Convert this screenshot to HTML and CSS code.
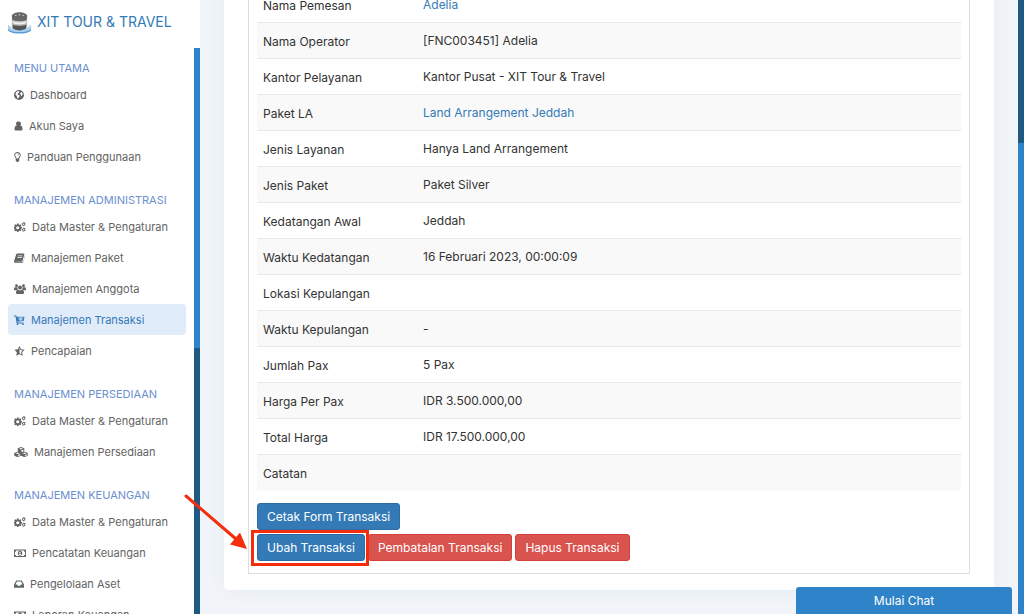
FILE: index.html
```html
<!DOCTYPE html>
<html lang="id">
<head>
<meta charset="utf-8">
<meta name="viewport" content="width=device-width, initial-scale=1">
<title>XIT Tour &amp; Travel</title>
<link rel="stylesheet" href="styles.css">
</head>
<body>
<svg class="sprite" aria-hidden="true">
  <symbol id="cogs" viewBox="0 0 24 20">
    <path fill-rule="evenodd" d="M6 3h3l.4 2.200 1.300.6L12.600 4.500l2 2-1.300 1.900.6 1.300L16 10v3l-2.100.4-.6 1.300 1.300 1.900-2 2-1.900-1.300-1.300.6L9 20H6l-.4-2.100-1.300-.6-1.900 1.300-2-2 1.300-1.900-.6-1.300L0 13v-3l1.100-.3.6-1.300L.4 6.500l2-2 1.900 1.300 1.300-.6zM7.500 8.300a3.200 3.200 0 1 0 0 6.400 3.200 3.200 0 0 0 0-6.400z"/>
    <path fill-rule="evenodd" d="M19 0l1.200 1.200 2-.3.7 1.700-1 1.600 1.100 1.500-1.200 1.600-1.600-.4-1.600 1.400-1.600-1-.1-1.700-1.600-1 .7-1.900 1.800-.2zM19.300 2.800a1.500 1.500 0 1 0 0 3 1.500 1.500 0 0 0 0-3zM19 11l1.200 1.200 2-.3.7 1.700-1 1.600 1.100 1.500-1.200 1.600-1.600-.4-1.600 1.400-1.600-1-.1-1.700-1.600-1 .7-1.900 1.800-.2zM19.300 13.800a1.500 1.500 0 1 0 0 3 1.500 1.500 0 0 0 0-3z"/>
  </symbol>
  <symbol id="money" viewBox="0 0 24 20">
    <path fill-rule="evenodd" d="M0 3h24v15H0zm4.500 1.800A3 3 0 0 1 1.800 7.500v6a3 3 0 0 1 2.700 2.700h15a3 3 0 0 1 2.700-2.700v-6a3 3 0 0 1-2.700-2.700zM12 5.500c3 0 4.500 2.300 4.500 5S15 15.500 12 15.500s-4.500-2.300-4.500-5 1.500-5 4.500-5zm-.8 2L9.500 9l.8 1 .9-.6v3.300H9.700V14h4.600v-1.300h-1.500V7.500z"/>
  </symbol>
</svg>
<div class="app">
  <aside class="sidebar">
    <a class="brand" href="#">
      <svg class="logo" viewBox="0 0 24 24" aria-hidden="true">
        <path d="M0 14v6c5 4 19 4 24 0v-6l-4 4c-4 2-12 2-16 0z" fill="#a9d2f2"/>
        <path d="M0 19c5 4 19 4 24 0v1.500c-5 4-19 4-24 0z" fill="#5a9bd8"/>
        <path d="M4 5c1-4 15-4 16 0v12c-1 4-15 4-16 0z" fill="#b9b9b9"/>
        <path d="M4 5c1-5 15-5 16 0l-.5 4c-3 2-12 2-15 0z" fill="#666"/>
        <path d="M5 10.500c4 2 10 2 14 0v2c-4 2-10 2-14 0z" fill="#eee"/>
        <path d="M5 14c3 2 11 2 14 0v4c-3 3-11 3-14 0z" fill="#555"/>
        <path d="M7 4.500h2m2-.5h2m2 .5h2" stroke="#ccc"/>
      </svg>
      <span>XIT TOUR &amp; TRAVEL</span>
    </a>
    <div class="sidebar-body">
      <nav class="menu">
        <section>
          <h2>MENU UTAMA</h2>
          <a href="#"><svg width="10" height="10" viewBox="0 0 20 20"><path fill-rule="evenodd" d="M10 0a10 10 0 1 0 0 20 10 10 0 0 0 0-20zM8 2l3 1.500-1 2-2.500 1.500-1 2 2.500.5 2.500 2-1 2.500-2 1.500-.5 2.500-2-3-.5-3.500-2.500-2C3 5.500 5 3 8 2zm5.500.8A8 8 0 0 1 18 9l-1.500.5-1 2.500-1.500-.5-.5-2.500-1.500-1 .5-2 2-.5z"/></svg>Dashboard</a>
          <a href="#"><svg width="9" height="10" viewBox="0 0 18 20"><path d="M9 1a4.600 4.600 0 0 1 3.500 8C15.500 9.500 17 12 17 16c0 2-1 3-3 3H4c-2 0-3-1-3-3 0-4 1.500-6.500 4.500-7A4.600 4.600 0 0 1 9 1z"/></svg>Akun Saya</a>
          <a href="#"><svg width="7" height="10" viewBox="0 0 14 20"><path fill-rule="evenodd" d="M7 0c4 0 6.500 3 6.500 6 0 3.500-3 4.500-3 8v3.500L8 20H6l-2.500-2.500V14c0-3.500-3-4.500-3-8 0-3 2.500-6 6.500-6zm0 1.800C4 1.800 2.300 4 2.300 6c0 2.500 2.500 3.500 2.900 7h3.600c.4-3.500 2.900-4.500 2.900-7 0-2-1.700-4.200-4.700-4.200zM7 3.500c2 0 3 1 3 2.500H8.800C8.800 5 8 4.700 7 4.700z"/></svg>Panduan Penggunaan</a>
        </section>
        <section>
          <h2>MANAJEMEN ADMINISTRASI</h2>
          <a href="#"><svg width="12" height="10"><use href="#cogs"/></svg>Data Master &amp; Pengaturan</a>
          <a href="#"><svg width="11" height="10" viewBox="0 0 22 20"><path fill-rule="evenodd" d="M7.500 1H19c1.500 0 2 1 1.700 2L17 15.500c-.4 1.500-1 2-2.500 2H3.500c-1 0-1.300.5-1 1H15c2 0 3-.5 3.500-2L22 5v1.500L18.500 18c-.5 1.500-1.500 2-3 2H3c-2 0-3.500-2-2.800-4L4 4c.5-2 1.500-3 3.500-3zM8 5l-.4 1.300h9L17 5zM7 8l-.4 1.300h9L16 8z"/></svg>Manajemen Paket</a>
          <a href="#"><svg width="12" height="10" viewBox="0 0 24 20"><circle cx="5" cy="3.500" r="2.800"/><circle cx="19" cy="3.500" r="2.800"/><circle cx="12" cy="7" r="4"/><path d="M2 6.500h5A6 6 0 0 0 8 11c-1.500 0-2.500.5-3.500 1.500H2c-1.500 0-2-1-2-2.500s.5-3.500 2-3.500zM22 6.500h-5a6 6 0 0 1-1 4.500c1.500 0 2.500.5 3.500 1.500H22c1.500 0 2-1 2-2.500s-.5-3.500-2-3.500zM8 11.500c2.500 1.500 5.500 1.500 8 0 3 0 4 3 4 5.500 0 2-1 3-3 3H7c-2 0-3-1-3-3 0-2.500 1-5.500 4-5.500z"/></svg>Manajemen Anggota</a>
          <a class="active" href="#" aria-current="page"><svg width="11" height="10" viewBox="0 0 22 20"><path fill-rule="evenodd" d="M0 1h4.500l.8 2.500H21L19.500 12 7 13.300V15h12v2H5l-.2-3L3.200 3H0zm9 4v2h3.500v2H9.200v1.500h3.300v1.200h1.800v-1.400h3l.3-1.500h-3.300V7H18V5z"/><circle cx="7" cy="18.300" r="1.700"/><circle cx="18" cy="18.300" r="1.700"/></svg>Manajemen Transaksi</a>
          <a href="#"><svg width="11" height="10" viewBox="0 0 22 20"><path fill-rule="evenodd" d="M11 0l3.200 6.500 7.100 1-5.100 5 1.200 7.200L11 16.300l-6.400 3.400 1.200-7.200-5.100-5 7.100-1zM11 4v10.500l4 2.200-.8-4.700 3.300-3.200-4.500-.7z"/></svg>Pencapaian</a>
        </section>
        <section>
          <h2>MANAJEMEN PERSEDIAAN</h2>
          <a href="#"><svg width="12" height="10"><use href="#cogs"/></svg>Data Master &amp; Pengaturan</a>
          <a href="#"><svg width="14" height="10" viewBox="0 0 28 20"><path fill-rule="evenodd" d="M14 0l6.500 2.500V9L27.500 12v5.500L21 20.200l-7-2.900-7 2.900L.5 17.500V12l7-3V2.500zm0 1.800L10 3.400l4 1.600 4-1.600zM15 6.700v3.700l3.700-1.600V5.200zM7.200 10.800l-4 1.700 4 1.700 4-1.700zM8 16v2.300l4.500-1.900V14zM21 10.800l-4 1.700 4 1.700 4-1.700zM21.800 16v2.300l4-1.700V14.300z"/></svg>Manajemen Persediaan</a>
        </section>
        <section>
          <h2>MANAJEMEN KEUANGAN</h2>
          <a href="#"><svg width="12" height="10"><use href="#cogs"/></svg>Data Master &amp; Pengaturan</a>
          <a href="#"><svg width="12" height="10"><use href="#money"/></svg>Pencatatan Keuangan</a>
          <a href="#"><svg width="10" height="10" viewBox="0 0 20 20"><path fill-rule="evenodd" d="M4.500 3h11L20 11v6.500H0V11zM6 5l-3.200 6H6l1.500 2.500h5L14 11h3.200L14 5z"/></svg>Pengelolaan Aset</a>
          <a href="#"><svg width="12" height="10"><use href="#money"/></svg>Laporan Keuangan</a>
        </section>
      </nav>
      <div class="track side-track"><div class="thumb"></div></div>
    </div>
  </aside>
  <main class="content">
    <div class="card">
      <div class="panel">
        <table class="details">
          <tbody>
            <tr><th scope="row">Nama Pemesan</th><td><a href="#">Adelia</a></td></tr>
            <tr><th scope="row">Nama Operator</th><td>[FNC003451] Adelia</td></tr>
            <tr><th scope="row">Kantor Pelayanan</th><td>Kantor Pusat - XIT Tour &amp; Travel</td></tr>
            <tr><th scope="row">Paket LA</th><td><a href="#">Land Arrangement Jeddah</a></td></tr>
            <tr><th scope="row">Jenis Layanan</th><td>Hanya Land Arrangement</td></tr>
            <tr><th scope="row">Jenis Paket</th><td>Paket Silver</td></tr>
            <tr><th scope="row">Kedatangan Awal</th><td>Jeddah</td></tr>
            <tr><th scope="row">Waktu Kedatangan</th><td>16 Februari 2023, 00:00:09</td></tr>
            <tr><th scope="row">Lokasi Kepulangan</th><td></td></tr>
            <tr><th scope="row">Waktu Kepulangan</th><td>-</td></tr>
            <tr><th scope="row">Jumlah Pax</th><td>5 Pax</td></tr>
            <tr><th scope="row">Harga Per Pax</th><td>IDR 3.500.000,00</td></tr>
            <tr><th scope="row">Total Harga</th><td>IDR 17.500.000,00</td></tr>
            <tr><th scope="row">Catatan</th><td></td></tr>
          </tbody>
        </table>
        <div class="actions">
          <button class="btn primary" type="button">Cetak Form Transaksi</button>
        </div>
        <div class="actions">
          <span class="marked">
            <button class="btn primary" type="button">Ubah Transaksi</button>
            <svg class="arrow" width="66" height="58" viewBox="0 0 66 58" aria-hidden="true"><path d="M3 2l50 43" stroke="#f42e0c" stroke-width="3" stroke-linecap="round"/><path d="M64 55l-17-4.500L57 38.500z" fill="#f42e0c"/></svg>
          </span>
          <button class="btn danger" type="button">Pembatalan Transaksi</button>
          <button class="btn danger" type="button">Hapus Transaksi</button>
        </div>
      </div>
    </div>
  </main>
  <div class="track page-track"><div class="thumb"></div></div>
</div>
<button class="chat" type="button">Mulai Chat</button>
</body>
</html>
```
FILE: styles.css
```css
* { box-sizing: border-box; }

body {
  margin: 0;
  overflow: hidden;
  background: #f1f5f9;
  color: #333;
  font: 12px/20px Inter, "Open Sans", sans-serif;
}

a { color: #337ab7; text-decoration: none; }
button { font: inherit; }
.sprite { display: none; }

.app { display: flex; height: 100vh; }

.sidebar {
  display: flex;
  flex: 0 0 200px;
  flex-direction: column;
  background: #fff;
}

.brand {
  display: flex;
  flex: 0 0 48px;
  align-items: center;
  gap: 6px;
  padding: 0 8px 4px;
  color: #337ab7;
  font-size: 14px;
  white-space: nowrap;
}

.logo { width: 23px; height: 23px; }

.sidebar-body { display: flex; flex: 1; min-height: 0; }

.menu {
  display: flex;
  flex: 1;
  flex-direction: column;
  gap: 17px;
  min-width: 0;
  padding: 9px 8px;
  overflow: hidden;
}

.menu section { flex: none; }

.menu h2 {
  margin: 0;
  padding-left: 6px;
  color: #6b8fd0;
  font-size: 11px;
  font-weight: 400;
  line-height: 22px;
  white-space: nowrap;
}

.menu a {
  display: flex;
  align-items: center;
  gap: 6px;
  height: 31px;
  padding: 0 6px;
  border-radius: 4px;
  color: #636363;
  font-size: 11px;
  white-space: nowrap;
}

.menu svg { flex: none; fill: currentColor; }
.menu .active { background: #e1ecfb; color: #337ab7; }

.track { flex: 0 0 6px; background: #1e5982; }
.thumb { background: #2f83c9; }
.side-track .thumb { height: 53%; }
.page-track { display: flex; flex-direction: column; padding-top: 143px; }
.page-track .thumb { flex: 1; }

.content { flex: 1; min-width: 0; padding: 0 24px; }

.card {
  margin-top: -41px;
  padding: 16px 24px;
  border-radius: 4px;
  background: #fff;
  box-shadow: 0 0 20px rgba(60, 80, 100, .06);
}

.panel { padding: 10px 8px 12px; border: 1px solid #ddd; }

.details { width: 100%; margin-bottom: 12px; border-collapse: collapse; }

.details th,
.details td {
  height: 36px;
  border-top: 1px solid #e8e8e8;
  text-align: left;
  vertical-align: top;
}

.details th { width: 160px; padding: 9px 6px 6px; font-weight: 400; }
.details td { padding: 8px 6px 7px; }
.details tr:nth-child(even) { background: #f9f9f9; }

.actions { display: flex; gap: 3px; }
.actions + .actions { margin-top: 4px; }

.btn {
  height: 27px;
  padding: 0 9px;
  border: 1px solid;
  border-radius: 3px;
  color: #fff;
  line-height: 25px;
  white-space: nowrap;
}

.primary { border-color: #2e6da4; background: #337ab7; }
.danger { border-color: #d43f3a; background: #d9534f; }

.marked { position: relative; z-index: 1; }

.marked::after {
  position: absolute;
  inset: -4px -4px -5px -6px;
  border: 3px solid #f42e0c;
  content: "";
  pointer-events: none;
}

.arrow { position: absolute; right: calc(100% + 8px); bottom: 9px; fill: none; }

.chat {
  position: fixed;
  right: 12px;
  bottom: 0;
  width: 216px;
  height: 27px;
  border: 0;
  border-radius: 3px 3px 0 0;
  background: #2f83c9;
  color: #fff;
}
```
